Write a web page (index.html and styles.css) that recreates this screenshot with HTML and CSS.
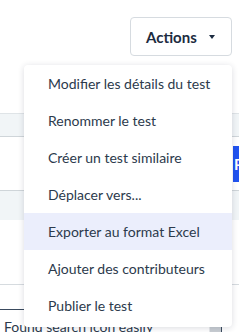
FILE: index.html
```html
<!DOCTYPE html>
<html lang="fr">
<head>
<meta charset="utf-8">
<link rel="stylesheet" href="styles.css">
</head>
<body>
<div class="page">
  <div class="header">
    <button class="actions">Actions <span class="caret"></span></button>
  </div>
  <div class="band band1"></div>
  <div class="row-white">
    <div class="blue-btn">P</div>
  </div>
  <div class="band band2"></div>
  <div class="row-white2"></div>
  <div class="row-tabs">
    <div class="tab-line"></div>
  </div>
  <div class="row-text">
    <span class="found">Found search icon easily</span>
    <span class="scroll"></span>
  </div>

  <ul class="menu">
    <li>Modifier les détails du test</li>
    <li>Renommer le test</li>
    <li>Créer un test similaire</li>
    <li>Déplacer vers...</li>
    <li class="active">Exporter au format Excel</li>
    <li>Ajouter des contributeurs</li>
    <li>Publier le test</li>
  </ul>
</div>
</body>
</html>
```
FILE: styles.css
```css
* { box-sizing: border-box; }
html, body { margin: 0; padding: 0; background: #fff; }
body { font-family: "Lato", "Open Sans", sans-serif; color: #2c3a4c; }
.page { position: relative; width: 239px; height: 332px; overflow: hidden; }

.header { height: 113px; display: flex; justify-content: flex-end; align-items: flex-start; padding: 17px 7px 0 0; }
.actions {
  width: 102px; height: 39px;
  border: 1px solid #d6dbe0; border-radius: 4px; background: #fff;
  font-family: "Lato", sans-serif; font-weight: 700; font-size: 15px; color: #1c2b40;
  display: flex; align-items: center; justify-content: flex-start; padding: 0 0 0 15px; gap: 12px;
}
.caret { width: 0; height: 0; border-left: 3px solid transparent; border-right: 3px solid transparent; border-top: 4px solid #1c2b40; margin-top: 1px; }

.band { background: #f1f5f7; }
.band1 { height: 24px; border-top: 1px solid #dfe4e7; border-bottom: 1px solid #cfd5d9; }
.row-white { height: 53px; position: relative; }
.blue-btn { position: absolute; left: 233px; top: 9px; width: 20px; height: 36px; background: #2153f0; color: #fff; font-size: 15px; font-weight: 700; line-height: 36px; padding-left: 1px; }
.band2 { height: 30px; border-top: 1px solid #cfd5d9; }
.row-white2 { height: 65px; border-bottom: 1px solid #d6dbdf; }
.row-tabs { height: 25px; position: relative; }
.tab-line { position: absolute; left: 0; bottom: 0; width: 60px; height: 1px; background: #3a4a5e; }
.row-text { height: 22px; position: relative; }
.found { position: absolute; left: 4px; top: 8px; font-size: 14px; color: #2c3a4c; white-space: nowrap; }
.scroll { position: absolute; left: 209px; top: 10px; width: 13px; height: 14px; background: #c9ced3; border-right: 1px solid #3a4a5e; border-left: 1px solid #e6e8ea; }

.menu {
  position: absolute; left: 24px; top: 65px; width: 208px;
  margin: 0; padding: 0 0 3px 0; list-style: none;
  background: #fff; border-radius: 4px;
  box-shadow: 0 1px 6px rgba(30, 40, 60, 0.16);
}
.menu li { height: 37px; line-height: 37px; padding-left: 24px; font-size: 14px; color: #2c3a4c; white-space: nowrap; }
.menu li.active { background: #ebeefc; }
```
